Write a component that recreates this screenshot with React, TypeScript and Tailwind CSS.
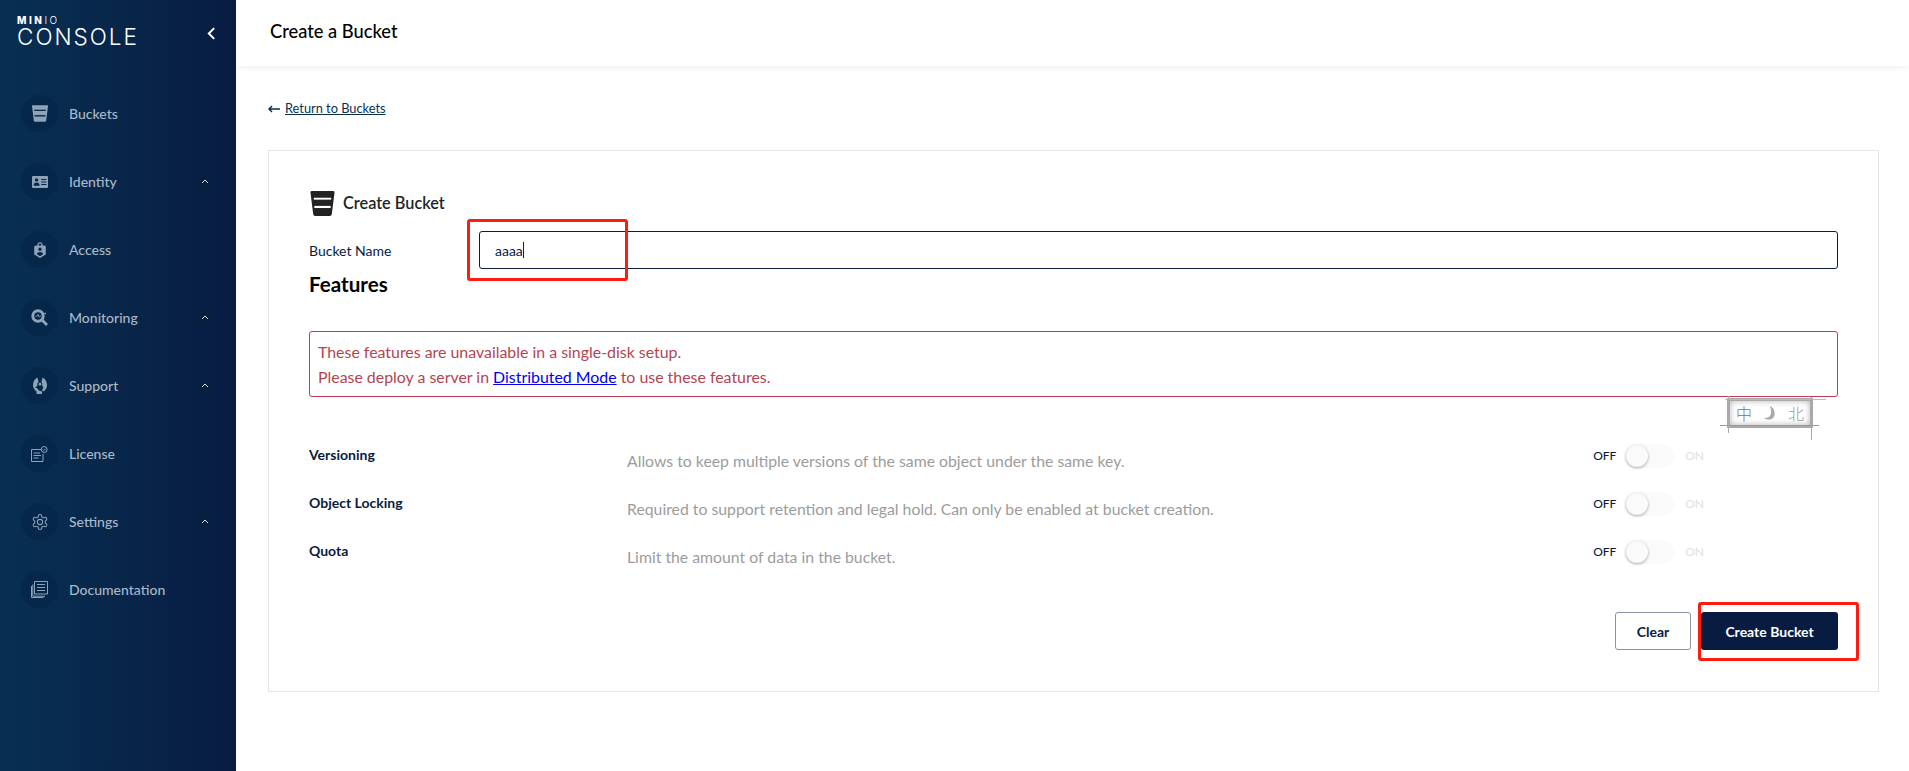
import type { ReactNode } from "react";

function BucketIcon({ className, gap }: { className: string; gap: string }) {
  return (
    <svg viewBox="0 0 25 26" className={className} fill="currentColor">
      <path d="M1.500 0h22a1.500 1.500 0 0 1 1.500 1.700L22.200 24a2.200 2.200 0 0 1-2.200 2H5a2.200 2.200 0 0 1-2.200-2L0 1.700A1.500 1.500 0 0 1 1.500 0Z" />
      <rect x="3.500" y="7" width="18" height="2" fill={gap} />
      <rect x="4" y="15.500" width="17" height="2.200" fill={gap} />
    </svg>
  );
}

const IdentityIcon = (
  <svg viewBox="0 0 16 12" className="w-4 h-3" fill="currentColor">
    <path
      fillRule="evenodd"
      d="M1 0h14a1 1 0 0 1 1 1v10a1 1 0 0 1-1 1H1a1 1 0 0 1-1-1V1a1 1 0 0 1 1-1Zm3.600 2.200a1.700 1.700 0 1 0 0 3.400 1.700 1.700 0 0 0 0-3.400ZM1.600 9.800h6c0-2-1.200-3.200-3-3.200s-3 1.200-3 3.200ZM9.200 3v1h5.200V3Zm0 2.500v1h5.200v-1Zm0 2.500v1h5.200V8Z"
    />
  </svg>
);

const AccessIcon = (
  <svg viewBox="0 0 12 16" className="w-3 h-4" fill="currentColor">
    <path
      fillRule="evenodd"
      d="M3.400 3.600V2.800a2.600 2.600 0 0 1 5.200 0v.8h1.600A1.600 1.600 0 0 1 11.800 5v7.400L6 16 .2 12.400V5a1.600 1.600 0 0 1 1.600-1.600Zm1.200 0h2.800v-.8a1.400 1.400 0 0 0-2.800 0ZM6 5.600a1.700 1.700 0 1 0 0 3.400 1.700 1.700 0 0 0 0-3.400ZM2.800 12.200 6 14.200l3.200-2c-.4-1.400-1.600-2.200-3.200-2.200s-2.800.8-3.200 2.200Z"
    />
  </svg>
);

const MonitoringIcon = (
  <svg viewBox="0 0 17 17" className="w-[17px] h-[17px]" fill="none" stroke="currentColor">
    <circle cx="7" cy="7" r="5.200" strokeWidth="3" />
    <path d="m11 11 5 5" strokeWidth="2.800" />
    <path d="M12 4.500h3" strokeWidth="1.200" />
    <path d="M4.500 7.200h1.600l1-2 1 3 .7-1h1" strokeWidth="0.800" />
  </svg>
);

const SupportIcon = (
  <svg viewBox="0 0 14 17" className="w-[14px] h-[17px]" fill="currentColor">
    <path
      fillRule="evenodd"
      d="M4.400.6 5.600 5a2.400 2.400 0 0 0-1 3.200L2 11h2l1.800 2.400L9 14.600V17H3.600v-2.400C1.400 13 0 10.800 0 8.200 0 4.800 1.800 1.800 4.400.6Zm5.200 0C12.200 1.800 14 4.800 14 8.200c0 2.600-1.400 4.800-3.400 6.200l-1.600-1.200 1.400-2.400-1.400-2.600a2.400 2.400 0 0 0-.6-3.200ZM7 5.800a1.400 1.400 0 1 1 0 2.800 1.400 1.400 0 0 1 0-2.800Z"
    />
  </svg>
);

const LicenseIcon = (
  <svg viewBox="0 0 17 16" className="w-[17px] h-4" fill="none" stroke="currentColor" strokeWidth="1">
    <path d="M10.500 3.500H.5v12h11.500V8" />
    <path d="M2.500 7h6.500M2.500 9.500h7.500M2.500 12h5" />
    <circle cx="13.200" cy="3.500" r="3" />
    <path d="m11.800 3.600 1 1 1.700-1.900" />
  </svg>
);

const SettingsIcon = (
  <svg viewBox="0 0 24 24" className="w-[18px] h-[18px]" fill="none" stroke="currentColor" strokeWidth="1.400">
    <path d="M12.220 2h-.44a2 2 0 0 0-2 2v.18a2 2 0 0 1-1 1.730l-.43.25a2 2 0 0 1-2 0l-.15-.08a2 2 0 0 0-2.730.73l-.22.38a2 2 0 0 0 .73 2.730l.15.1a2 2 0 0 1 1 1.720v.51a2 2 0 0 1-1 1.740l-.15.09a2 2 0 0 0-.73 2.730l.22.38a2 2 0 0 0 2.730.73l.15-.08a2 2 0 0 1 2 0l.43.25a2 2 0 0 1 1 1.730V20a2 2 0 0 0 2 2h.44a2 2 0 0 0 2-2v-.18a2 2 0 0 1 1-1.730l.43-.25a2 2 0 0 1 2 0l.15.08a2 2 0 0 0 2.730-.73l.22-.39a2 2 0 0 0-.73-2.730l-.15-.08a2 2 0 0 1-1-1.740v-.5a2 2 0 0 1 1-1.740l.15-.09a2 2 0 0 0 .73-2.730l-.22-.38a2 2 0 0 0-2.730-.73l-.15.08a2 2 0 0 1-2 0l-.43-.25a2 2 0 0 1-1-1.730V4a2 2 0 0 0-2-2z" />
    <circle cx="12" cy="12" r="3.500" />
  </svg>
);

const DocumentationIcon = (
  <svg viewBox="0 0 17 17" className="w-[17px] h-[17px]" fill="none" stroke="currentColor" strokeWidth="1">
    <path d="M3.500.5h13v12.500h-13z" />
    <path d="M6 3.500h8M6 6.500h8M6 9.500h8" />
    <path d="M1.800 3.500v11.700h12.200" />
    <path d="M.5 5v11.500h12" />
  </svg>
);

type NavItem = { label: string; icon: ReactNode; expandable?: boolean };

const navItems: NavItem[] = [
  { label: "Buckets", icon: <BucketIcon className="w-4 h-[17px]" gap="#04274a" /> },
  { label: "Identity", icon: IdentityIcon, expandable: true },
  { label: "Access", icon: AccessIcon },
  { label: "Monitoring", icon: MonitoringIcon, expandable: true },
  { label: "Support", icon: SupportIcon, expandable: true },
  { label: "License", icon: LicenseIcon },
  { label: "Settings", icon: SettingsIcon, expandable: true },
  { label: "Documentation", icon: DocumentationIcon },
];

const features = [
  {
    name: "Versioning",
    description: "Allows to keep multiple versions of the same object under the same key.",
  },
  {
    name: "Object Locking",
    description: "Required to support retention and legal hold. Can only be enabled at bucket creation.",
  },
  {
    name: "Quota",
    description: "Limit the amount of data in the bucket.",
  },
];

function Sidebar() {
  return (
    <aside className="w-[236px] shrink-0 bg-linear-to-r from-[#073052] to-[#081c42]">
      <div className="flex items-start justify-between pl-[17px] pr-[20px] pt-[15px] h-[95px]">
        <div className="text-white font-['Inter',sans-serif]">
          <div className="text-[10px] leading-[10px] tracking-[2.500px]">
            <span className="font-extrabold">MIN</span>
            <span className="font-light">IO</span>
          </div>
          <div className="text-[22.500px] leading-[23px] font-light tracking-[2px]">CONSOLE</div>
        </div>
        <svg viewBox="0 0 10 14" className="w-[9px] h-[13px] mt-[12px] text-white" fill="none" stroke="currentColor" strokeWidth="2.200">
          <path d="M8 1 2 7l6 6" />
        </svg>
      </div>
      <nav className="flex flex-col gap-[31px]">
        {navItems.map((item) => (
          <div key={item.label} className="flex items-center h-[37px] pl-[21px] pr-[24px]">
            <div className="w-[37px] h-[37px] rounded-full bg-[#04274a] flex items-center justify-center text-[#8fa3b8]">
              {item.icon}
            </div>
            <span className="ml-[11px] text-[14px] font-medium text-[#a9b8c8]">{item.label}</span>
            {item.expandable && (
              <div className="ml-auto w-[15px] h-[15px] rounded-[2px] bg-[#06203f] flex items-center justify-center">
                <svg viewBox="0 0 8 5" className="w-[8px] h-[5px] text-[#d5dce4]" fill="none" stroke="currentColor" strokeWidth="1">
                  <path d="m1 4 3-3 3 3" />
                </svg>
              </div>
            )}
          </div>
        ))}
      </nav>
    </aside>
  );
}

function FeatureSwitch() {
  return (
    <div className="flex items-center text-[12px] font-medium mt-[1px]">
      <span className="text-[#081c42] w-[32px]">OFF</span>
      <div className="w-[49px] h-[24px] rounded-full bg-[#fafafa] flex items-center">
        <div className="w-[22px] h-[22px] ml-[1px] rounded-full bg-[#fafafa] shadow-[0_1px_3px_rgba(0,0,0,0.35)]" />
      </div>
      <span className="text-[#e2e2e2] ml-[11px]">ON</span>
    </div>
  );
}

function Watermark() {
  return (
    <div className="absolute left-[1727px] top-[398px] w-[86px] h-[30px] border-[3px] border-[#a9a9a9] flex items-center justify-around font-['Noto_Sans_CJK_SC',sans-serif] font-light text-[16px] leading-[16px] text-[#777] shadow-[inset_0_0_6px_rgba(0,0,0,0.3)]">
      <span className="absolute left-[-5px] right-[-16px] top-[-2px] h-px bg-[#bbb]" />
      <span className="absolute left-[-10px] right-[-9px] bottom-[-1px] h-px bg-[#999]" />
      <span className="absolute top-[-5px] bottom-[-8px] left-[-2px] w-px bg-[#aaa]" />
      <span className="absolute top-[-4px] bottom-[-15px] right-[-2px] w-px bg-[#aaa]" />
      <span>中</span>
      <svg viewBox="0 0 12 14" className="w-[12px] h-[14px] text-[#aaa]" fill="currentColor">
        <path d="M6 0c5 2 6 9 3 12-2 2-6 2-9 0 3 0 5-1 6-2 2-3 1-7 0-10Z" />
      </svg>
      <span className="text-[#999]">北</span>
    </div>
  );
}

export default function App() {
  return (
    <div className="relative flex h-[771px] bg-white overflow-hidden font-['Lato',sans-serif]">
      <Sidebar />
      <main className="flex-1 min-w-0 flex flex-col">
        <header className="h-[66px] flex items-center pl-[34px] pb-[3px] bg-white shadow-[0_2px_6px_rgba(0,0,0,0.06)]">
          <h1 className="text-[18.300px] font-medium text-black">Create a Bucket</h1>
        </header>
        <div className="pl-[32px] pr-[30px]">
          <a className="flex items-center h-[16px] mt-[35px] text-[12.800px] text-[#073052]">
            <svg viewBox="0 0 12 8" className="w-[12px] h-[8px] mr-[5px]" fill="none" stroke="currentColor" strokeWidth="1.500">
              <path d="M12 4H1M4 1 1 4l3 3" />
            </svg>
            <span className="underline">Return to Buckets</span>
          </a>
          <section className="mt-[33px] h-[542px] border border-[#e5e5e5] pt-[40px] px-[40px]">
            <div className="flex items-center h-[25px]">
              <BucketIcon className="w-[25px] h-[25px] ml-[1px] text-[#222]" gap="#ffffff" />
              <h2 className="ml-[8px] pb-[1px] text-[16.300px] font-semibold text-[#202428]">Create Bucket</h2>
            </div>
            <div className="flex items-center mt-[15px]">
              <label className="w-[170px] text-[14px] text-[#081c42]">Bucket Name</label>
              <div className="flex-1 h-[38px] border border-[#081c42] rounded-[3px] flex items-center pl-[15px] text-[14px] text-[#081c42]">
                <span>aaaa</span>
                <span className="w-px h-[16px] bg-[#081c42]" />
              </div>
            </div>
            <h3 className="text-[20.600px] leading-[30px] font-bold text-black">Features</h3>
            <div className="mt-[32px] h-[66px] border border-[#c13c50] rounded-[3px] pl-[8px] pt-[7px] text-[15.900px] leading-[25px] text-[#b5434f]">
              <div>These features are unavailable in a single-disk setup.</div>
              <div>
                Please deploy a server in <a className="underline text-[#0000ee]">Distributed Mode</a> to use these features.
              </div>
            </div>
            <div className="mt-[46px] flex flex-col gap-[24px]">
              {features.map((feature) => (
                <div key={feature.name} className="flex h-[24px] items-start">
                  <div className="w-[318px] text-[14px] leading-[24px] font-bold text-[#081c42]">{feature.name}</div>
                  <div className="flex-1 text-[15.800px] leading-[24px] mt-[6px] text-[#9c9c9c]">{feature.description}</div>
                  <div className="mr-[134px]">
                    <FeatureSwitch />
                  </div>
                </div>
              ))}
            </div>
            <div className="flex justify-end gap-[10px] mt-[49px]">
              <button className="w-[76px] h-[38px] border border-[#8a94a6] rounded-[3px] bg-white text-[14px] font-bold text-[#081c42]">
                Clear
              </button>
              <button className="w-[137px] h-[38px] rounded-[3px] bg-[#081c42] text-[14px] font-bold text-white">
                Create Bucket
              </button>
            </div>
          </section>
        </div>
      </main>
      <div className="absolute left-[467px] top-[219px] w-[161px] h-[62px] border-[3px] border-[#fb1d12] rounded-[3px]" />
      <div className="absolute left-[1698px] top-[602px] w-[161px] h-[59px] border-[3px] border-[#fb1d12] rounded-[3px]" />
      <Watermark />
    </div>
  );
}
